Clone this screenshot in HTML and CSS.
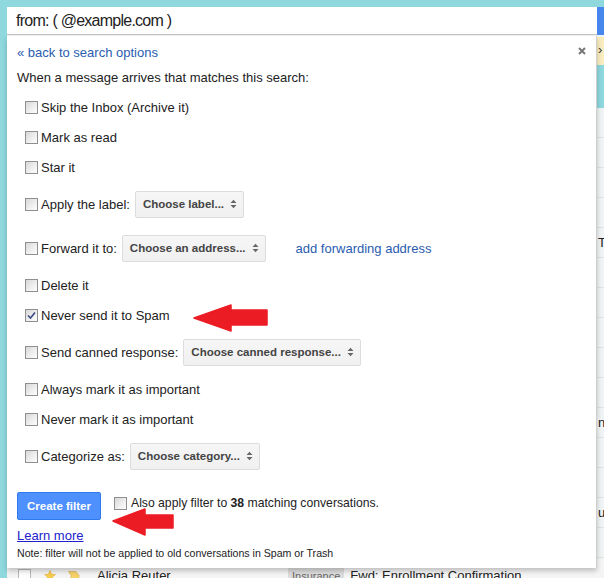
FILE: index.html
```html
<!DOCTYPE html>
<html>
<head>
<meta charset="utf-8">
<link rel="stylesheet" href="styles.css">
</head>
<body>
<div class="page">
  <div class="rail"></div>
  <div class="main">
    <div class="topband"></div>
    <div class="searchrow">
      <div class="searchbox">from: ( @example.com )</div>
      <div class="searchbtn"></div>
    </div>
    <div class="notice"><span class="tail">›</span></div>
    <div class="tabs"></div>
    <div class="list">
      <div class="row"></div>
      <div class="row"></div>
      <div class="row"></div>
      <div class="row"></div>
      <div class="row"><span class="tail">The</span></div>
      <div class="row"></div>
      <div class="row"></div>
      <div class="row"></div>
      <div class="row"></div>
      <div class="row"></div>
      <div class="row"><span class="tail">nt</span></div>
      <div class="row"></div>
      <div class="row"></div>
      <div class="row"><span class="tail">ut</span></div>
      <div class="row"></div>
      <div class="row mail">
        <span class="mcb"></span>
        <svg class="star" width="12" height="12" viewBox="0 0 12 12"><path d="M6 0.5 L7.6 4.2 L11.5 4.5 L8.5 7.1 L9.4 11 L6 8.9 L2.6 11 L3.5 7.1 L0.5 4.5 L4.4 4.2 Z" fill="#f7cb4d" stroke="#e6b43a" stroke-width="0.6"/></svg>
        <svg class="imp" width="12" height="10" viewBox="0 0 12 10"><path d="M0.5 0.5 H8 L11.5 5 L8 9.5 H0.5 L3.5 5 Z" fill="#f7d26a" stroke="#d9ad3a" stroke-width="0.6"/></svg>
        <span class="sender">Alicia Reuter</span>
        <span class="tag">Insurance</span>
        <span class="subject">Fwd: Enrollment Confirmation</span>
      </div>
    </div>
  </div>

  <div class="panel">
    <div class="head">
      <a class="link back">« back to search options</a>
      <svg class="close" width="8" height="8" viewBox="0 0 8 8"><path d="M1 1 L7 7 M7 1 L1 7" stroke="#777" stroke-width="2"/></svg>
    </div>
    <div class="intro">When a message arrives that matches this search:</div>
    <div class="opts">
      <div class="opt"><span class="cb"></span>Skip the Inbox (Archive it)</div>
      <div class="opt"><span class="cb"></span>Mark as read</div>
      <div class="opt"><span class="cb"></span>Star it</div>
      <div class="opt sel"><span class="cb"></span>Apply the label:<span class="select">Choose label...<svg class="updown" width="7" height="10" viewBox="0 0 7 10"><path d="M0.5 4 L3.5 0.8 L6.5 4 Z M0.5 6 L3.5 9.2 L6.5 6 Z" fill="#666"/></svg></span></div>
      <div class="opt sel"><span class="cb"></span>Forward it to:<span class="select">Choose an address...<svg class="updown" width="7" height="10" viewBox="0 0 7 10"><path d="M0.5 4 L3.5 0.8 L6.5 4 Z M0.5 6 L3.5 9.2 L6.5 6 Z" fill="#666"/></svg></span><a class="link fwd">add forwarding address</a></div>
      <div class="opt"><span class="cb"></span>Delete it</div>
      <div class="opt"><span class="cb checked"><svg width="11" height="11" viewBox="0 0 11 11"><path d="M2 5.5 L4.5 8 L9 2.5" fill="none" stroke="#3d4f86" stroke-width="1.7"/></svg></span>Never send it to Spam</div>
      <div class="opt sel"><span class="cb"></span>Send canned response:<span class="select">Choose canned response...<svg class="updown" width="7" height="10" viewBox="0 0 7 10"><path d="M0.5 4 L3.5 0.8 L6.5 4 Z M0.5 6 L3.5 9.2 L6.5 6 Z" fill="#666"/></svg></span></div>
      <div class="opt"><span class="cb"></span>Always mark it as important</div>
      <div class="opt"><span class="cb"></span>Never mark it as important</div>
      <div class="opt sel"><span class="cb"></span>Categorize as:<span class="select">Choose category...<svg class="updown" width="7" height="10" viewBox="0 0 7 10"><path d="M0.5 4 L3.5 0.8 L6.5 4 Z M0.5 6 L3.5 9.2 L6.5 6 Z" fill="#666"/></svg></span></div>
    </div>
    <div class="actions">
      <div class="btn">Create filter</div>
      <div class="also"><span class="cb"></span><span>Also apply filter to <b>38</b> matching conversations.</span></div>
    </div>
    <a class="learn">Learn more</a>
    <div class="note">Note: filter will not be applied to old conversations in Spam or Trash</div>
  </div>

  <svg class="arrow a1" width="77" height="30" viewBox="0 0 77 30"><path d="M2 15 L39 2 L39 7 L75 7 L75 22 L39 22 L39 28 Z" fill="#ec1c24" stroke="#ec1c24" stroke-width="1.5" stroke-linejoin="round"/></svg>
  <svg class="arrow a2" width="64" height="30" viewBox="0 0 64 30"><path d="M2 14 L34 2 L34 8 L62 8 L62 21 L34 21 L34 28 Z" fill="#ec1c24" stroke="#ec1c24" stroke-width="1.5" stroke-linejoin="round"/></svg>
</div>
</body>
</html>
```

FILE: styles.css
```css
* { box-sizing: border-box; }
html, body { margin: 0; padding: 0; }
body {
  font-family: "Liberation Sans", Arial, sans-serif;
  font-size: 13px;
  color: #222;
  background: #8fd8de;
}
.page {
  position: relative;
  width: 604px;
  height: 578px;
  overflow: hidden;
  display: grid;
  grid-template-columns: 7px 1fr;
  background: #8fd8de;
}
.rail { background: #8fd8de; }
.main { display: flex; flex-direction: column; min-width: 0; }
.topband { height: 7px; flex: none; }
.searchrow { display: flex; height: 28px; flex: none; }
.searchbox {
  width: 590px;
  flex: none;
  background: #fff;
  border-bottom: 1px solid #c4c4c4;
  padding-left: 9px;
  font-size: 16px;
  letter-spacing: -0.75px;
  line-height: 28px;
  color: #222;
}
.searchbtn { flex: 1; background: #4787ed; }
.notice {
  height: 30px;
  flex: none;
  background: #f9ecbf;
  border-top: 2px solid #eef3f4;
  line-height: 26px;
  font-size: 13px;
  color: #333;
}
.tail { display: block; padding-left: 591px; white-space: nowrap; }
.tabs { height: 43px; flex: none; background: #8fd8de; }
.list { background: #f1f4f4; flex: 1; }
.row {
  height: 30px;
  border-bottom: 1px solid #dde4e4;
  line-height: 29px;
  color: #222;
}
.row.mail {
  display: flex;
  align-items: center;
  background: #f5f5f5;
  line-height: 16px;
  padding-top: 6px;
}
.mcb {
  width: 13px; height: 13px;
  margin-left: 11px;
  border: 1px solid #b8b8b8;
  background: #fff;
  flex: none;
}
.star { margin-left: 13px; flex: none; }
.imp { margin-left: 12px; flex: none; }
.sender { margin-left: 17px; width: 191px; flex: none; }
.tag {
  background: #dddddd;
  color: #666;
  font-size: 11px;
  padding: 1px 4px;
  flex: none;
}
.subject { margin-left: 6px; white-space: nowrap; }

.panel {
  position: absolute;
  left: 7px;
  top: 36px;
  width: 590px;
  height: 532px;
  background: #fff;
  border-right: 1px solid #cfcfcf;
  box-shadow: 0 3px 5px rgba(0, 0, 0, 0.22);
  padding: 8px 10px 0 10px;
  font-size: 13px;
  color: #222;
}
.head { display: flex; justify-content: space-between; align-items: flex-start; }
.link { color: #2a5db0; text-decoration: none; }
.back { line-height: 18px; }
.close { margin-top: 3px; }
.intro { margin-top: 7px; line-height: 18px; }
.opts { margin-top: 5px; padding-left: 8px; }
.opt { display: flex; align-items: center; height: 30px; white-space: nowrap; }
.opt.sel { height: 44px; }
.cb {
  width: 13px; height: 13px;
  flex: none;
  margin-right: 3px;
  border: 1px solid #8e8f8f;
  background: linear-gradient(135deg, #d8d8d8 0%, #f0f0f0 60%, #fdfdfd 100%);
  display: flex; align-items: center; justify-content: center;
}
.cb.checked svg { display: block; }
.select {
  display: inline-flex;
  align-items: center;
  height: 27px;
  margin-left: 5px;
  padding: 0 6px 0 7px;
  border: 1px solid #dcdcdc;
  border-radius: 2px;
  background: linear-gradient(#f6f6f6, #f0f0f0);
  font-size: 11.5px;
  font-weight: bold;
  color: #444;
}
.updown { margin-left: 6px; }
.fwd { margin-left: 30px; }
.actions { display: flex; align-items: flex-start; margin-top: 14px; }
.btn {
  width: 84px;
  height: 28px;
  display: flex; align-items: center; justify-content: center;
  background: #4d90fe;
  border: 1px solid #3079ed;
  border-radius: 2px;
  color: #fff;
  font-size: 11.5px;
  font-weight: bold;
}
.also {
  display: flex;
  align-items: center;
  margin-left: 13px;
  margin-top: 3px;
  line-height: 16px;
  font-size: 12.2px;
  white-space: nowrap;
}
.also .cb { margin-right: 4px; }
.also b { font-weight: bold; }
.learn {
  display: block;
  margin-top: 7px;
  line-height: 18px;
  color: #2222cc;
  text-decoration: underline;
  width: max-content;
}
.note { margin-top: 2px; font-size: 10.6px; line-height: 12px; color: #222; }

.arrow { position: absolute; }
.a1 { left: 192px; top: 303px; }
.a2 { left: 111px; top: 507px; }
```
